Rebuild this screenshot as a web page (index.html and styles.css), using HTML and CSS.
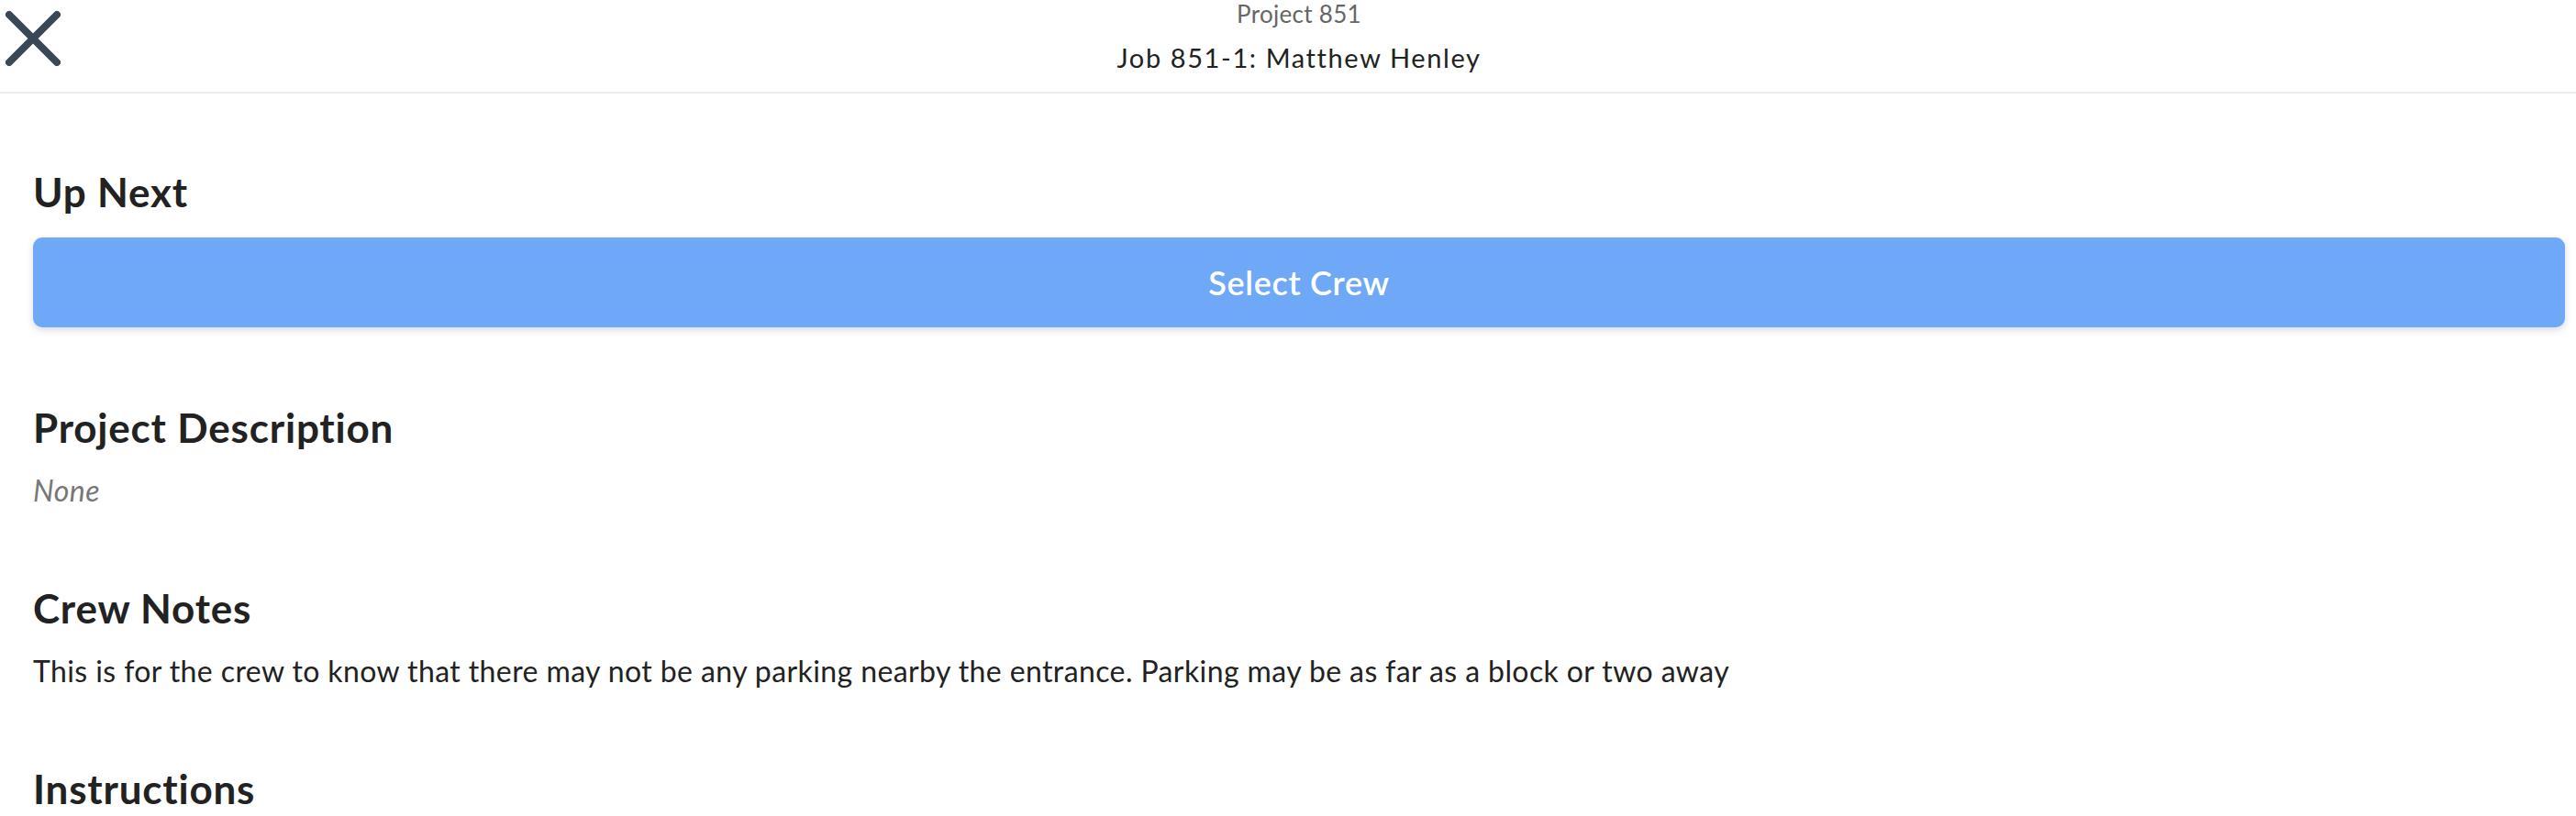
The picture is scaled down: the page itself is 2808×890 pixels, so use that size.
FILE: index.html
```html
<!DOCTYPE html>
<html lang="en">
<head>
<meta charset="utf-8">
<title>Job 851-1: Matthew Henley</title>
<link rel="stylesheet" href="styles.css">
</head>
<body>
<header class="topbar">
  <button class="close-btn" aria-label="Close">
    <svg viewBox="0 0 60 60" width="60" height="60" aria-hidden="true">
      <path d="M4 4 L56 56 M56 4 L4 56" fill="none" stroke="#394756" stroke-width="8" stroke-linecap="round"/>
    </svg>
  </button>
  <div class="titles">
    <div class="subtitle">Project 851</div>
    <div class="title">Job 851-1: Matthew Henley</div>
  </div>
  <div class="spacer"></div>
</header>
<main class="content">
  <section class="section">
    <h2 class="heading">Up Next</h2>
    <button class="primary-btn">Select Crew</button>
  </section>
  <section class="section">
    <h2 class="heading">Project Description</h2>
    <p class="empty">None</p>
  </section>
  <section class="section">
    <h2 class="heading">Crew Notes</h2>
    <p class="body-text">This is for the crew to know that there may not be any parking nearby the entrance. Parking may be as far as a block or two away</p>
  </section>
  <section class="section">
    <h2 class="heading">Instructions</h2>
  </section>
</main>
</body>
</html>
```
FILE: styles.css
```css
html, body {
  margin: 0;
  padding: 0;
  background: #ffffff;
}
body {
  font-family: "Lato", "Noto Sans", sans-serif;
  color: #222222;
  width: 2808px;
  height: 890px;
  overflow: hidden;
}
.topbar {
  display: flex;
  align-items: flex-start;
  height: 100px;
  border-bottom: 2px solid #e9edf8;
}
.close-btn {
  width: 72px;
  padding: 12px 0 0 6px;
  margin: 0;
  border: 0;
  background: none;
  display: flex;
  align-items: flex-start;
  justify-content: flex-start;
}
.close-btn svg {
  display: block;
}
.titles {
  flex: 1;
  text-align: center;
}
.spacer {
  width: 48px;
}
.subtitle {
  font-size: 26px;
  line-height: 31px;
  color: #666666;
  letter-spacing: 0.3px;
}
.title {
  margin-top: 14px;
  font-size: 29px;
  line-height: 35px;
  color: #222222;
  letter-spacing: 1.6px;
}
.content {
  padding: 81px 12px 0 36px;
  display: flex;
  flex-direction: column;
  gap: 83px;
}
.section {
  display: flex;
  flex-direction: column;
}
.heading {
  margin: 0 0 23px;
  font-size: 44px;
  line-height: 53px;
  font-weight: 700;
  color: #222222;
  letter-spacing: 0.8px;
}
.primary-btn {
  height: 98px;
  width: 100%;
  border: 0;
  border-radius: 10px;
  background: #6fa8f7;
  color: #ffffff;
  font-family: "Lato", "Noto Sans", sans-serif;
  font-size: 36px;
  font-weight: 600;
  letter-spacing: 0.7px;
  box-shadow: 0 3px 8px rgba(0, 0, 0, 0.15);
}
.empty {
  margin: 0;
  font-size: 32px;
  line-height: 38px;
  font-style: italic;
  color: #777777;
  letter-spacing: 0.5px;
}
.body-text {
  margin: 0;
  font-size: 32px;
  line-height: 38px;
  color: #222222;
  letter-spacing: 0.4px;
}
```
